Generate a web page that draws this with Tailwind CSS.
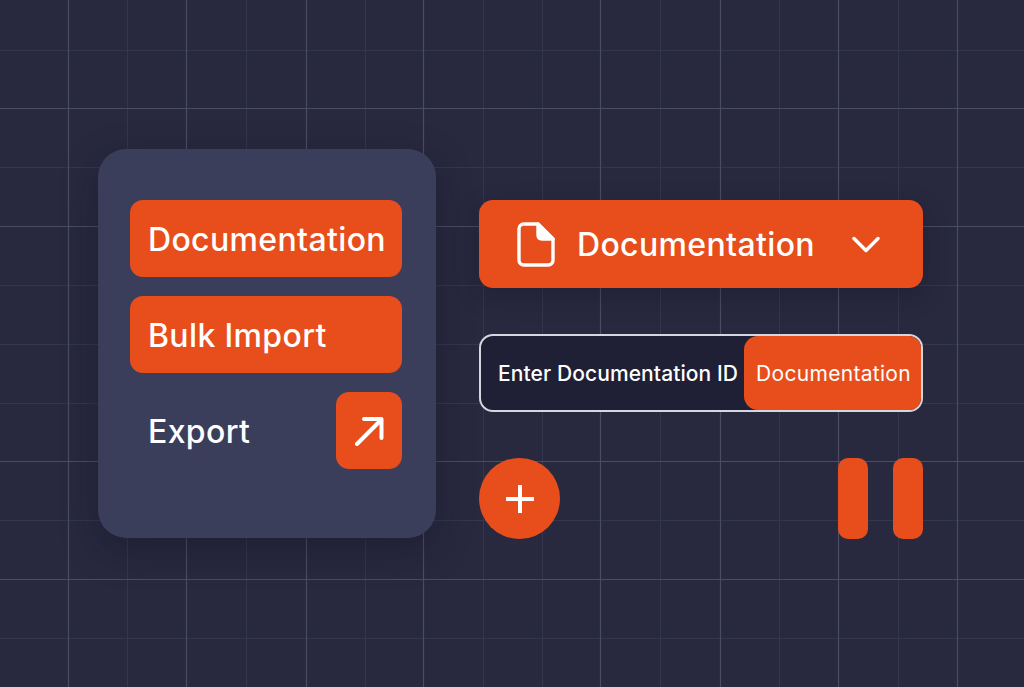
<!DOCTYPE html>
<html lang="en">
<head>
    <meta charset="UTF-8">
    <meta name="viewport" content="width=device-width, initial-scale=1.0">
    <title>Documentation buttons</title>
    <script src="https://cdn.jsdelivr.net/npm/@tailwindcss/browser@4"></script>
</head>
<body class="bg-[#28293f] font-['Inter',sans-serif] text-white overflow-hidden">
    <div class="relative w-[1024px] h-[687px] overflow-hidden">
        <!-- background grid -->
        <svg class="absolute inset-0" width="1024" height="687" viewBox="0 0 1024 687" fill="none">
            <g stroke="#34364f" stroke-width="1">
                <path d="M0 50.5H1024M0 167.5H1024M0 285.5H1024M0 344.5H1024M0 403.5H1024M0 520.5H1024M0 638.5H1024"/>
                <path d="M127.5 0V687M246.5 0V687M365.5 0V687M483.5 0V687M542.5 0V687M660.5 0V687M779.5 0V687M898.5 0V687"/>
            </g>
            <g stroke="#4a4c66" stroke-width="1.2">
                <path d="M0 108.5H1024M0 226.5H1024M0 461.5H1024M0 579.5H1024"/>
                <path d="M68.5 0V687M186.5 0V687M306.5 0V687M423.5 0V687M600.5 0V687M720.5 0V687M838.5 0V687M957.5 0V687"/>
            </g>
        </svg>

        <div class="relative flex items-start pl-[98px] pt-[149px]">
            <!-- left menu card -->
            <div class="w-[338px] h-[389px] rounded-[28px] bg-[#3a3e5a] pt-[51px] pl-[32px] pr-[34px] flex flex-col gap-[19px] shadow-[0_12px_36px_rgba(15,15,30,0.35)]">
                <div class="h-[77px] rounded-[13px] bg-[#e84e1b] flex items-center pl-[18px] pt-[3px] text-[32px] font-medium tracking-[0.35px]">Documentation</div>
                <div class="h-[77px] rounded-[13px] bg-[#e84e1b] flex items-center pl-[18px] pt-[3px] text-[32px] font-medium tracking-[0.35px]">Bulk Import</div>
                <div class="h-[77px] flex items-center justify-between pl-[18px] text-[32px] font-medium tracking-[0.35px]">
                    <span class="pt-[3px]">Export</span>
                    <div class="w-[66px] h-[77px] rounded-[13px] bg-[#e84e1b] flex items-center justify-center">
                        <svg width="30" height="30" viewBox="0 0 30 30" fill="none" stroke="#fff" stroke-width="4" stroke-linecap="round" stroke-linejoin="round">
                            <path d="M3 28L27 4"/>
                            <path d="M10 3H27.5V22"/>
                        </svg>
                    </div>
                </div>
            </div>

            <!-- right column -->
            <div class="w-[444px] ml-[43px] pt-[51px] flex flex-col">
                <div class="h-[88px] rounded-[14px] bg-[#e84e1b] flex items-center pl-[38px] pr-[43px] shadow-[0_8px_24px_rgba(15,15,30,0.3)]">
                    <svg width="38" height="45" viewBox="0 0 38 45" fill="none" stroke="#fff" stroke-width="3.4" stroke-linejoin="round">
                        <path d="M7 2H21L36 17V38C36 41 34 43 31 43H7C4 43 2 41 2 38V7C2 4 4 2 7 2Z"/>
                        <path d="M21 2L36 17H25C22.5 17 21 15.5 21 13V2Z" fill="#fff"/>
                    </svg>
                    <span class="ml-[22px] pt-[2px] text-[32px] font-medium tracking-[0.35px]">Documentation</span>
                    <svg class="ml-auto" width="28" height="17" viewBox="0 0 28 17" fill="none" stroke="#fff" stroke-width="3.4" stroke-linecap="round" stroke-linejoin="round">
                        <path d="M2 2.5L14 14.5L26 2.5"/>
                    </svg>
                </div>

                <div class="mt-[46px] h-[78px] rounded-[14px] border-2 border-[#d6d6e0] bg-[#1f1f35] flex items-center overflow-hidden">
                    <span class="pl-[17px] pt-[2px] text-[21px] font-medium tracking-[0.1px] whitespace-nowrap">Enter Documentation ID</span>
                    <div class="ml-auto w-[177px] h-full rounded-l-[14px] bg-[#e84e1b] flex items-center justify-center pt-[2px] pl-[2px] text-[21px] tracking-[0.3px]">Documentation</div>
                </div>

                <div class="mt-[46px] flex items-start justify-between">
                    <div class="w-[81px] h-[81px] rounded-full bg-[#e84e1b] flex items-center justify-center">
                        <svg width="28" height="28" viewBox="0 0 28 28" fill="none" stroke="#fff" stroke-width="4">
                            <path d="M14 0V28M0 14H28"/>
                        </svg>
                    </div>
                    <div class="flex gap-[25px]">
                        <div class="w-[30px] h-[81px] rounded-[10px] bg-[#e84e1b]"></div>
                        <div class="w-[30px] h-[81px] rounded-[10px] bg-[#e84e1b]"></div>
                    </div>
                </div>
            </div>
        </div>
    </div>
</body>
</html>
